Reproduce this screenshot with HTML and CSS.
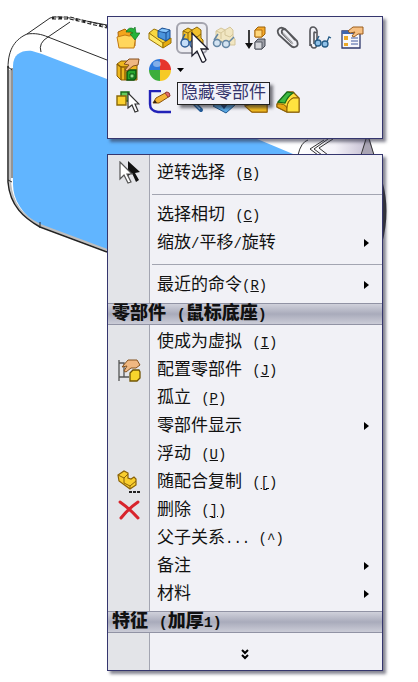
FILE: index.html
```html
<!DOCTYPE html>
<html lang="zh-CN">
<head>
    <meta charset="UTF-8">
    <meta name="viewport" content="width=device-width, initial-scale=1.0">
    <title>零部件</title>
    <link rel="stylesheet" href="styles.css">
</head>
<body>
<!-- model view behind the menus -->
<svg class="model" width="418" height="270" viewBox="0 0 418 270" aria-hidden="true">
    <path d="M8 66C8 50 16 38 28 33L55 17L70 17L420 78L384 170L384 240L107 253L40 228C20 216 9 200 8 182Z" fill="#fff"/>
    <path d="M13 66C13 54 22 50 32 51L42 54L107 79L262 141L293 154L293 200L120 254L40 226C22 214 13 200 13 184Z" fill="#61b5ff"/>
    <path d="M10 70V182C12 204 22 216 40 225L107 250" fill="none" stroke="#bdbdbd" stroke-width="2"/>
    <g fill="none" stroke="#2b2b2b" stroke-width="1">
        <path d="M8 68C8 48 16 39 27 34C35 33 41 34 48 37L107 60"/>
        <path d="M27 34L50 18Q56 16 70 18L107 25"/>
        <path d="M48 37L70 22M41 52Q38 43 48 37"/>
        <path d="M12 68V178M8 67l4 3M8 180l4 2M40 222v6"/>
    </g>
    <path d="M52 18L70 18L107 27" fill="none" stroke="#222" stroke-width="3" stroke-dasharray="4 2"/>
    <path d="M54 18L70 18L107 27" fill="none" stroke="#ddd" stroke-width="1" stroke-dasharray="5 3"/>
    <path d="M8 66V182C10 206 24 218 40 227L107 252" fill="none" stroke="#222" stroke-width="1.500"/>
    <path d="M297 155Q299 142 309 139L365 139L373 155Z" fill="url(#cap)"/>
    <path d="M365 139H370L374 155H362Z" fill="#aaa5b4"/>
    <path d="M298 155Q301 142 308 140M333 139L319 148L328 155M324 140L310 149L318 155M328 139L314 149L322 155M366 139L361 155M369 139L374 155" fill="none" stroke="#333"/>
    <path d="M382 180Q391 210 382 244Z" fill="#333"/>
    <defs>
        <linearGradient id="cap"><stop offset="0" stop-color="#fff"/><stop offset=".5" stop-color="#f4f2f8"/><stop offset="1" stop-color="#bdb6cc"/></linearGradient>
    </defs>
</svg>

<main class="menus">
    <section class="panel toolbar" aria-label="工具栏">
        <div class="tool-row">
            <button class="tool" aria-label="打开零件">
                <svg viewBox="0 0 24 24"><path d="M2 6l7-3 3 3h7v14H3z" fill="#f3a51c" stroke="#a8640a"/><path d="M1 11l8-2 4 1 7-1-2 13H3z" fill="#ffd65c" stroke="#c37a10"/><path d="M10 6q3-6 8-3l1-2 1 6h4l-5 7-5-6 3-1q-3-2-6-1z" fill="#25b339" stroke="#12731f" stroke-width=".7"/></svg>
            </button>
            <button class="tool" aria-label="打开装配体">
                <svg viewBox="0 0 24 24"><path d="M1 7l5-4 5 2 11 9-7 5z" fill="#f8d840" stroke="#9a7206"/><path d="M1 7l14 10v5L1 13z" fill="#ffea6a" stroke="#9a7206"/><path d="M15 17l8-5v5l-8 5z" fill="#e5ac10" stroke="#9a7206"/><path d="M10 5l4-3 8 2v8l-4 3-8-4z" fill="#4a94dc" stroke="#1a4d91"/><path d="M10 5l8 2 4-3M18 7v8" fill="none" stroke="#1a4d91"/><path d="M11 5l3-2 7 1-3 2z" fill="#8cc8fa"/></svg>
            </button>
            <div class="tool-wrap">
                <button class="tool active" aria-label="隐藏零部件" aria-describedby="tip">
                    <svg viewBox="0 0 24 24"><path d="M3 5l5-3 4 2 5-3 4 3v8l2 2v6h-8L3 12z" fill="#f1c12c" stroke="#8d6708"/><path d="M3 5l5 2 4-3M8 7v7M12 4v5l5 2 4-3" fill="none" stroke="#8d6708"/><g fill="#c5def8" stroke="#315f98" stroke-width="1.5"><circle cx="5" cy="17" r="4"/><circle cx="14" cy="18" r="4"/><path d="M2 14l3-6M9 16h2" fill="none"/></g></svg>
                </button>
                <span class="tooltip" id="tip" role="tooltip">隐藏零部件</span>
                <svg class="cursor" width="18" height="32" viewBox="0 0 18 32" aria-hidden="true"><path d="M1 1V24L6 19L11 30Q13 31 15 28L10 17H17Z" fill="#fff" stroke="#1b1b28" stroke-width="1.3"/></svg>
            </div>
            <button class="tool" aria-label="更改透明度">
                <svg viewBox="0 0 24 24"><path d="M4 5l5-3 4 2 5-3 3 3v7l2 2v6h-7L4 12z" fill="#f1e6c2" stroke="#d5c69a"/><path d="M4 5l5 2 4-3M9 7v6M13 4v5l5 2 3-3" fill="none" stroke="#d5c69a"/><g fill="#d4e4f2" stroke="#6486a4" stroke-width="1.5"><circle cx="5" cy="17" r="3.5"/><circle cx="14" cy="18" r="3.5"/><path d="M2 14l4-6M8 16h2M17 16l5-5" fill="none"/></g></svg>
            </button>
            <button class="tool" aria-label="压缩">
                <svg viewBox="0 0 24 24"><path d="M5 4v15" stroke="#111" stroke-width="1.6"/><path d="M1 17h8l-4 6z" fill="#111"/><path d="M11 4l3-3h7v7l-3 3h-7z" fill="#f6a92a" stroke="#9b6105"/><path d="M11 4h7v7h-7z" fill="#ffd77c" stroke="#b36f10"/><path d="M11 16l3-3h7v7l-3 3h-7z" fill="#9b9da6" stroke="#454853"/><path d="M11 16h7v7h-7z" fill="#d4d5da" stroke="#555863"/></svg>
            </button>
            <button class="tool" aria-label="配合">
                <svg viewBox="0 0 24 24"><path d="M16 17L6 7q-1-4 3-4l12 12q2 5-2 6-2 1-5-2L3 9Q0 4 4 2q3-1 6 2l9 10" fill="none" stroke="#55565a" stroke-width="1.8"/><path d="M7 7l10 11" stroke="#b5b5b8" stroke-width="1.3"/></svg>
            </button>
            <button class="tool" aria-label="查看配合">
                <svg viewBox="0 0 24 24"><path d="M2 20V5q0-4 3-4t4 4v12q0 5-3 5t-3-4M6 18V7q0-2 2 0" fill="none" stroke="#55565b" stroke-width="1.6"/><g fill="#8fc1e8" stroke="#245b86" stroke-width="1.3"><circle cx="10" cy="17" r="3"/><circle cx="17" cy="18" r="3"/><path d="M9 14l2-4M19 16l2-5 2 1" fill="none"/></g></svg>
            </button>
            <button class="tool" aria-label="零部件属性">
                <svg viewBox="0 0 24 24"><path d="M2 5h18v17H2z" fill="#f7f7fb" stroke="#303a6c" stroke-width="1.3"/><path d="M2 5h18v3H2z" fill="#3f65ae"/><path d="M4 10h4v4H4zM4 17h4v3H4z" fill="#eda927"/><path d="M11 12h7M11 15h7M11 18h7" stroke="#405aa0"/><path d="M8 5l5-4h10v7h-5l-4 3-2-1 3-4-5 1z" fill="#f6c083" stroke="#9b5d1c"/></svg>
            </button>
        </div>
        <div class="tool-row">
            <button class="tool" aria-label="编辑零件">
                <svg viewBox="0 0 24 24"><path d="M1 6l4-3h14l2 4v15H5l-4-4z" fill="#eeb71e" stroke="#8a5e04"/><path d="M5 8v14M1 6l4 3h8M9 10v12" fill="none" stroke="#8a5e04" stroke-width="1.4"/><path d="M11 14l2-2h7v8l-2 2h-7z" fill="#27a62d" stroke="#0b5411" stroke-width="1.4"/><path d="M14 16h4v4h-4z" fill="#8fe68a" stroke="#0b5411"/><path d="M8 6l5-5h10l-1 6-5 1-6 5-2-1 4-5z" fill="#efb781" stroke="#844f1e"/></svg>
            </button>
            <button class="tool" aria-label="外观">
                <svg viewBox="0 0 24 24"><path d="M12 12V1A11 11 0 0 1 23 12z" fill="#e6352d"/><path d="M12 12H23A11 11 0 0 1 12 23z" fill="#f6ca26"/><path d="M12 12V23A11 11 0 0 1 1 12z" fill="#3dae3c"/><path d="M12 12H1A11 11 0 0 1 12 1z" fill="#2d78db"/><ellipse cx="9" cy="6" rx="4" ry="3" fill="#fff" opacity=".4"/></svg>
            </button>
            <button class="drop" aria-label="外观选项"><svg width="7" height="4" viewBox="0 0 7 4"><path d="M0 0h7L3.500 4z"/></svg></button>
        </div>
        <div class="tool-row">
            <button class="tool" aria-label="选择零部件">
                <svg viewBox="0 0 24 24"><path d="M5 2h8v9H5z" fill="#65ca5e" stroke="#176c1a" stroke-width="1.4"/><path d="M1 6h9v9H1z" fill="#fbd130" stroke="#8a6808" stroke-width="1.4"/><path d="M12 3v15l4-3 3 7 3-1-3-7h4z" fill="#fff" stroke="#333" stroke-width="1.2"/></svg>
            </button>
            <button class="tool" aria-label="编辑草图">
                <svg viewBox="0 0 24 24"><path d="M13 1H2v13q0 7 8 8h13" fill="none" stroke="#2222b8" stroke-width="2.400"/><path d="M5 13l3-5L19 2l3 4-11 7z" fill="#f5b536" stroke="#8b550d"/><path d="M17 3l2-1q3 0 3 4l-2 1z" fill="#e26a6a" stroke="#99403b"/><path d="M5 13l2-3 2 3z" fill="#33211a"/></svg>
            </button>
            <button class="tool" aria-label="放大所选">
                <svg viewBox="0 0 24 24"><circle cx="9" cy="8" r="6" fill="#d7eafb" stroke="#567fa8" stroke-width="2"/><path d="M14 13l7 7" stroke="#235c9a" stroke-width="4" stroke-linecap="round"/><path d="M14 13l6 6" stroke="#8cc0ec" stroke-width="1.500"/></svg>
            </button>
            <button class="tool" aria-label="正视于">
                <svg viewBox="0 0 24 24"><path d="M1 16l7-5 15 4-9 8z" fill="#5aa9e4" stroke="#1c568f"/><path d="M12 2v16M9 14l3 4 3-4" fill="none" stroke="#1b3f74" stroke-width="1.500"/></svg>
            </button>
            <button class="tool" aria-label="拉伸">
                <svg viewBox="0 0 24 24"><path d="M1 9l6-6h16v19H8l-7-6z" fill="#f9d036" stroke="#986306" stroke-width="1.300"/><path d="M8 14h15v8H8l-7-6z" fill="#f4bd20" stroke="#986306"/></svg>
            </button>
            <button class="tool" aria-label="圆角">
                <svg viewBox="0 0 24 24"><path d="M1 14L12 2l5 0 6 6v14H11l-10-5z" fill="#ffdf3c" stroke="#8a6006" stroke-width="1.300"/><path d="M1 14q8-1 10 4v4l-10-5zM11 18q0-7 6-10h6" fill="#e9a813" stroke="#8a6006"/><path d="M11 18q0-7 6-10h6v14H11z" fill="#ffe23f" stroke="#8a6006"/><path d="M2 12L11 2l6 1q-5 3-8 10z" fill="#3fb941" stroke="#126b1b" stroke-width="1.200"/></svg>
            </button>
        </div>
    </section>

    <nav class="panel menu" aria-label="快捷菜单">
        <div class="group">
            <button class="item">
                <svg class="item-icon" viewBox="0 0 24 24"><path d="M11 0v15l4-3 4 9 3-2-4-7 5-1z" fill="#111"/><path d="M3 1v17l4-4 4 8 3-1-4-8h5z" fill="#fff" stroke="#555" stroke-width="1.200"/></svg>
                <span>逆转选择 <span class="key">(<u>B</u>)</span></span>
            </button>
            <hr>
            <button class="item"><span>选择相切 <span class="key">(<u>C</u>)</span></span></button>
            <button class="item sub"><span>缩放<span class="key">/</span>平移<span class="key">/</span>旋转</span></button>
            <hr>
            <button class="item sub"><span>最近的命令<span class="key">(<u>R</u>)</span></span></button>
        </div>
        <h2 class="heading">零部件 <span class="key">(</span>鼠标底座<span class="key">)</span></h2>
        <div class="group">
            <button class="item"><span>使成为虚拟 <span class="key">(<u>I</u>)</span></span></button>
            <button class="item">
                <svg class="item-icon" viewBox="0 0 24 24"><path d="M2 2v21M2 5h5v14M2 19h10" fill="none" stroke="#555" stroke-width="1.300"/><path d="M5 9l6-7h9l3 5-4 3h-5l-5 4-2-1 3-5z" fill="#efb781" stroke="#85531f"/><path d="M13 15l3-3h6l1 2v6l-3 3h-7z" fill="#f7d52c" stroke="#725506" stroke-width="1.300"/></svg>
                <span>配置零部件 <span class="key">(<u>J</u>)</span></span>
            </button>
            <button class="item"><span>孤立 <span class="key">(<u>P</u>)</span></span></button>
            <button class="item sub"><span>零部件显示</span></button>
            <button class="item"><span>浮动 <span class="key">(<u>U</u>)</span></span></button>
            <button class="item">
                <svg class="item-icon" viewBox="0 0 24 24"><path d="M1 5l6-4 4 2v5l3 1 3-2 2 2v6l-6 4L2 11z" fill="#f9ce2e" stroke="#8a6207" stroke-width="1.200"/><path d="M1 5l6 3 4-4M7 8v5l6 3 6-5M13 16v3" fill="none" stroke="#8a6207"/><path d="M12 21h3v2h-3zM16 21h3v2h-3zM20 21h3v2h-3z" fill="#222"/></svg>
                <span>随配合复制 <span class="key">(<u>[</u>)</span></span>
            </button>
            <button class="item">
                <svg class="item-icon" viewBox="0 0 24 24"><path d="M3 4q10 7 18 16M21 4Q11 11 4 20" fill="none" stroke="#d8242c" stroke-width="3" stroke-linecap="round"/></svg>
                <span>删除 <span class="key">(<u>]</u>)</span></span>
            </button>
            <button class="item"><span>父子关系<span class="key">... (^)</span></span></button>
            <button class="item sub"><span>备注</span></button>
            <button class="item sub"><span>材料</span></button>
        </div>
        <h2 class="heading">特征 <span class="key">(</span>加厚<span class="key">1)</span></h2>
        <button class="more" aria-label="展开菜单">
            <svg width="8" height="11" viewBox="0 0 8 11"><path d="M1 1l3 3 3-3M1 6l3 3 3-3" fill="none" stroke="#000" stroke-width="2"/></svg>
        </button>
    </nav>
</main>
</body>
</html>
```

FILE: styles.css
```css
:root {
    --panel-bg: #f1f1f6;
    --panel-border: #35366e;
    --gutter: #e3e4e8;
    --line: #a3a5b1;
}

* {
    margin: 0;
    padding: 0;
    box-sizing: border-box;
}

body {
    background-color: #fff;
    color: #111;
    font-family: "Liberation Mono", "Noto Sans CJK SC", monospace;
    font-size: 17px;
}

button {
    background: none;
    border: none;
    color: inherit;
    font: inherit;
}

.model {
    position: absolute;
    top: 0;
    left: 0;
}

.menus {
    position: relative;
    display: flex;
    flex-direction: column;
    gap: 15px;
    padding: 16px 35px 11px 107px;
}

.panel {
    background-color: var(--panel-bg);
    border: 1px solid var(--panel-border);
    box-shadow: 3px 3px 3px rgba(50, 50, 70, 0.6);
}

/* Toolbar */
.toolbar {
    position: relative;
    z-index: 1;
    padding: 5px 4px 20px;
}

.tool-row {
    display: flex;
    align-items: center;
}

.tool {
    display: flex;
    align-items: center;
    justify-content: center;
    width: 32px;
    height: 32px;
    border-radius: 6px;
}

.tool svg {
    width: 24px;
    height: 24px;
}

.tool.active {
    border: 2px solid #a4a4ae;
    background-color: #ededf2;
}

.tool-wrap {
    position: relative;
}

.drop {
    display: flex;
    align-items: center;
    padding: 0 1px;
}

.tooltip {
    position: absolute;
    z-index: 2;
    top: 60px;
    left: 1px;
    padding: 1px 3px 0;
    border: 1px solid #222;
    background-color: #f1f1f8;
    box-shadow: 3px 3px 3px rgba(30, 30, 40, 0.6);
    color: #34346c;
    line-height: 20px;
    white-space: nowrap;
}

.cursor {
    position: absolute;
    z-index: 3;
    top: 10px;
    left: 15px;
}

/* Context menu */
.menu {
    background: linear-gradient(to right, var(--gutter) 41px, var(--line) 41px, var(--line) 42px, var(--panel-bg) 42px);
}

.group {
    padding: 4px 0 3px;
}

.heading + .group {
    padding-top: 3px;
}

.group:first-child {
    padding-bottom: 4px;
}

.item {
    display: grid;
    grid-template-columns: 41px 1fr 18px;
    column-gap: 8px;
    align-items: center;
    width: 100%;
    height: 28px;
    line-height: 26px;
    text-align: left;
    white-space: nowrap;
}

.item > span {
    grid-column: 2;
    grid-row: 1;
    padding-top: 2px;
}

.item-icon {
    grid-column: 1;
    grid-row: 1;
    justify-self: center;
    width: 24px;
    height: 24px;
}

.item.sub::after {
    content: "";
    grid-column: 3;
    border-left: 5px solid #000;
    border-top: 4px solid transparent;
    border-bottom: 4px solid transparent;
    justify-self: start;
}

.key {
    font-size: 14px;
}

.menu hr {
    margin: 7px 0 6px 44px;
    border: none;
    border-top: 1px solid var(--line);
}

.heading {
    height: 22px;
    padding-left: 4px;
    border: 1px solid #9193a4;
    border-width: 1px 0;
    background: linear-gradient(#d0d1db, #a9abbb 50%, #cbccd7);
    font-size: 18px;
    font-weight: 900;
    line-height: 20px;
    white-space: nowrap;
}

.heading .key {
    font-size: 15px;
}

.more {
    display: flex;
    align-items: center;
    justify-content: center;
    width: 100%;
    height: 37px;
    padding-top: 6px;
}
```
